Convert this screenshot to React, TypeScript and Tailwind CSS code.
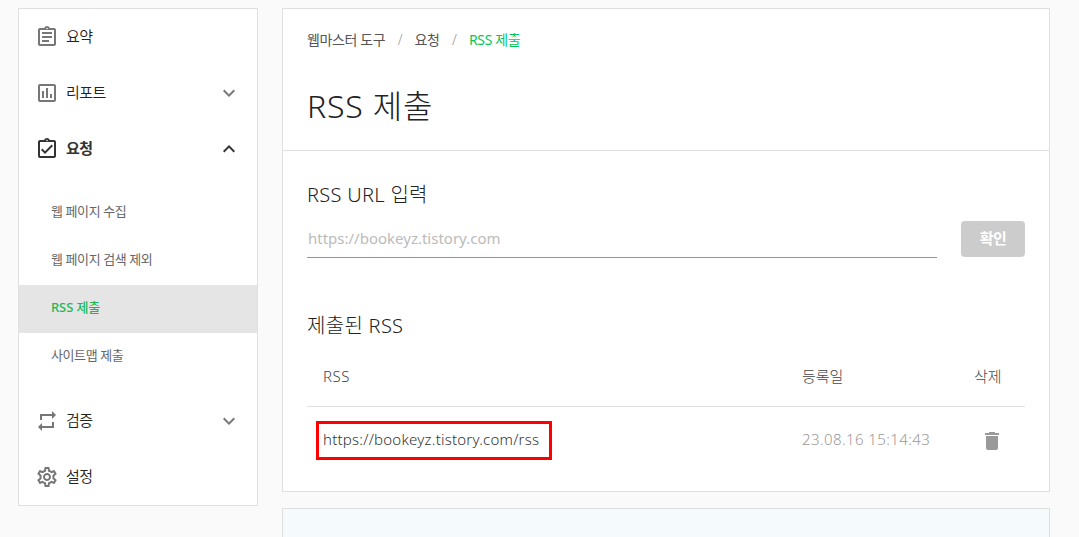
import { Fragment } from 'react';
import type { IconType } from 'react-icons';
import {
  MdDelete,
  MdKeyboardArrowDown,
  MdKeyboardArrowUp,
  MdOutlineAssessment,
  MdOutlineAssignment,
  MdOutlineAssignmentTurnedIn,
  MdOutlineSettings,
  MdRepeat,
} from 'react-icons/md';

interface MenuItem {
  label: string;
  icon: IconType;
  expandable?: boolean;
  children?: string[];
}

const menu: MenuItem[] = [
  { label: '요약', icon: MdOutlineAssignment },
  { label: '리포트', icon: MdOutlineAssessment, expandable: true },
  {
    label: '요청',
    icon: MdOutlineAssignmentTurnedIn,
    expandable: true,
    children: ['웹 페이지 수집', '웹 페이지 검색 제외', 'RSS 제출', '사이트맵 제출'],
  },
  { label: '검증', icon: MdRepeat, expandable: true },
  { label: '설정', icon: MdOutlineSettings },
];

const currentPage = 'RSS 제출';
const breadcrumbs = ['웹마스터 도구', '요청', currentPage];

const feeds = [{ url: 'https://bookeyz.tistory.com/rss', registeredAt: '23.08.16 15:14:43' }];

function Sidebar() {
  return (
    <nav className="w-60 shrink-0 self-start border border-[#e0e0e0] bg-white">
      {menu.map(({ label, icon: Icon, expandable, children }) => {
        const Arrow = children ? MdKeyboardArrowUp : MdKeyboardArrowDown;
        return (
          <Fragment key={label}>
            <button
              type="button"
              className={`flex h-14 w-full items-center pl-4 pr-4 text-left text-[15px] tracking-[-0.5px] ${
                children ? 'font-bold text-[#333]' : 'font-[350] text-[#222]'
              }`}
            >
              <Icon className={`mr-[7px] h-6 w-6 ${children ? 'text-[#333]' : 'text-[#777]'}`} />
              <span className="flex-1 pb-0.5">{label}</span>
              {expandable && <Arrow className={`h-6 w-6 ${children ? 'text-[#333]' : 'text-[#777]'}`} />}
            </button>
            {children && (
              <ul className="py-3">
                {children.map((child) => (
                  <li
                    key={child}
                    className={`flex h-12 items-center pl-8 pb-0.5 text-[13px] ${
                      child === currentPage
                        ? 'bg-[#e5e5e5] font-medium tracking-[-0.1px] text-[#1db954]'
                        : 'tracking-[-0.4px] text-[#666]'
                    }`}
                  >
                    {child}
                  </li>
                ))}
              </ul>
            )}
          </Fragment>
        );
      })}
    </nav>
  );
}

function Breadcrumbs() {
  return (
    <div className="flex h-5 items-center text-sm tracking-[-0.4px] text-[#555]">
      {breadcrumbs.map((crumb, index) => (
        <Fragment key={crumb}>
          {index > 0 && <span className="mx-[12.5px] font-light text-[#999]">/</span>}
          <span className={crumb === currentPage ? 'text-[#03c75a]' : ''}>{crumb}</span>
        </Fragment>
      ))}
    </div>
  );
}

export default function App() {
  return (
    <div className="flex h-[537px] gap-6 overflow-hidden bg-[#fafafa] pl-[18px] pr-[29px] pt-2 font-['Noto_Sans','Noto_Sans_CJK_KR',sans-serif]">
      <Sidebar />
      <main className="flex min-w-0 flex-1 flex-col gap-4">
        <section className="h-[484px] shrink-0 border border-[#e0e0e0] bg-white">
          <header className="h-[142px] border-b border-[#e0e0e0] px-6 pt-[21px]">
            <Breadcrumbs />
            <h1 className="mt-8 text-[32px] leading-[48px] font-light tracking-[0.8px] text-[#222]">{currentPage}</h1>
          </header>
          <div className="px-6 pt-[30px]">
            <h2 className="text-xl leading-7 font-light tracking-[0.3px] text-[#222]">RSS URL 입력</h2>
            <div className="mt-3 flex items-start gap-6">
              <input
                placeholder="https://bookeyz.tistory.com"
                className="h-[37px] min-w-0 flex-1 border-b border-[#f66] pl-px pb-0.5 text-[15px] outline-none placeholder:text-[#bbb]"
              />
              <button type="button" className="h-9 w-16 rounded bg-[#ccc] pb-0.5 text-[15px] font-bold tracking-[-0.5px] text-white">
                확인
              </button>
            </div>
            <h2 className="mt-[54px] text-xl leading-7 font-light tracking-[0.3px] text-[#222]">제출된 RSS</h2>
            <table className="mt-2 w-full table-fixed text-left">
              <thead className="border-b border-[#e0e0e0] text-[15px] text-[#444]">
                <tr className="h-[58px]">
                  <th className="w-[479px] pb-0.5 pl-4 font-light tracking-[0.5px]">RSS</th>
                  <th className="pb-0.5 pl-4 font-light">등록일</th>
                  <th className="w-[67px] pb-0.5 pl-4 font-light">삭제</th>
                </tr>
              </thead>
              <tbody className="text-[15px] font-light">
                {feeds.map((feed) => (
                  <tr key={feed.url} className="h-[68px]">
                    <td className="pl-[9px]">
                      <span className="flex h-[39px] w-[236px] items-center border-3 border-[#f00] pb-0.5 pl-1 tracking-[0.23px] text-[#333]">
                        {feed.url}
                      </span>
                    </td>
                    <td className="pb-0.5 pl-4 tracking-[0.4px] text-[#999]">{feed.registeredAt}</td>
                    <td className="pl-[22px] pt-0.5">
                      <MdDelete className="h-6 w-6 text-[#999]" />
                    </td>
                  </tr>
                ))}
              </tbody>
            </table>
          </div>
        </section>
        <section className="h-24 shrink-0 border border-[#e0e0e0] bg-[#f5fafd]" />
      </main>
    </div>
  );
}
